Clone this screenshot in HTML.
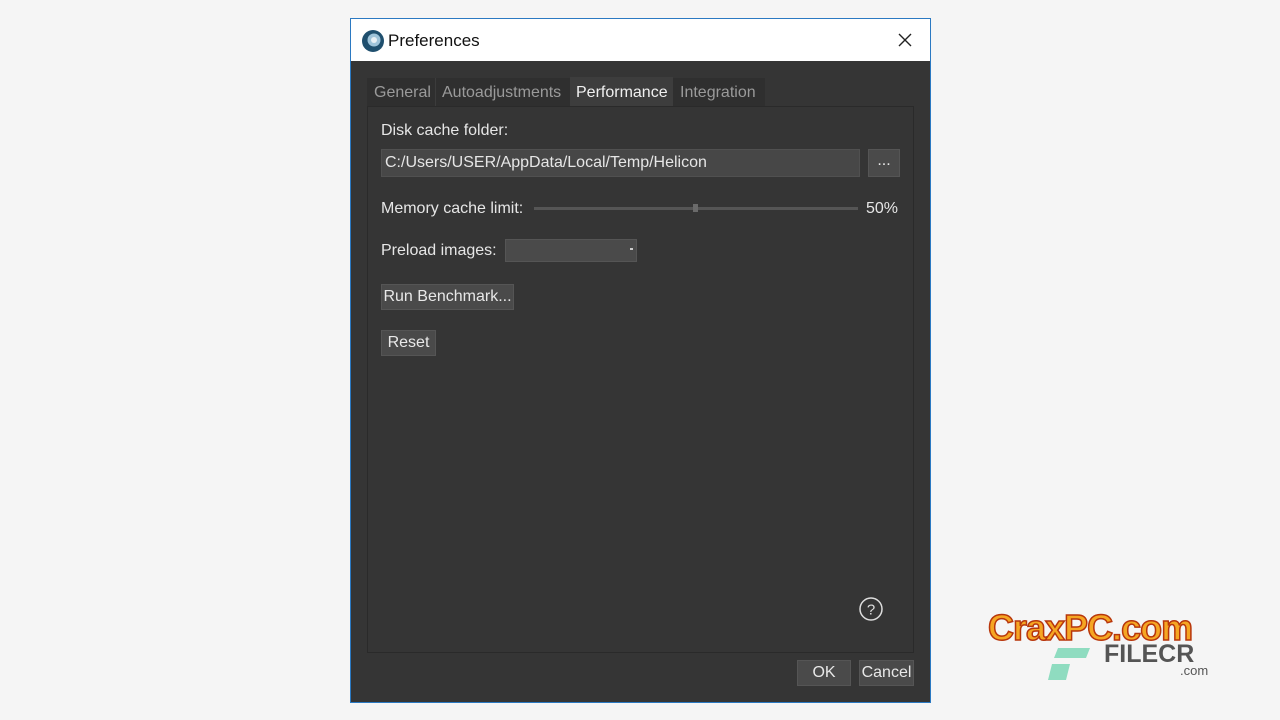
<!DOCTYPE html>
<html><head><meta charset="utf-8"><style>
body{margin:0;width:1280px;height:720px;background:#f5f5f5;position:relative;overflow:hidden;font-family:"Liberation Sans",sans-serif}
.a{position:absolute}
.win{left:350px;top:18px;width:579px;height:683px;border:1px solid #2b79c2;background:#353535}
.t{color:#e6e6e6;font-size:16px;position:absolute;white-space:nowrap}
.btn{position:absolute;background:#4a4a4a;border:1px solid #555;box-sizing:border-box;color:#e8e8e8;font-size:16px;text-align:center}
</style></head><body>
<div class="a win">
 <div class="a" style="left:0;top:0;width:579px;height:42px;background:#fff"></div>
 <svg class="a" style="left:10px;top:10px" width="24" height="24" viewBox="0 0 24 24"><circle cx="12" cy="12" r="11" fill="#1f4f6e"/><circle cx="13" cy="11" r="6.5" fill="#9fc4da"/><circle cx="13" cy="11" r="3" fill="#e8f0f5"/></svg>
 <div class="a" style="left:37px;top:12px;font-size:17px;color:#111">Preferences</div>
 <svg class="a" style="left:547px;top:14px" width="14" height="14"><path d="M1 1L13 13M13 1L1 13" stroke="#222" stroke-width="1.4"/></svg>
 <div class="a" style="left:16px;top:59px;width:398px;height:28px;background:#2f2f2f"></div>
 <div class="t" style="left:23px;top:65px;color:#9a9a9a">General</div>
 <div class="a" style="left:84px;top:59px;width:1px;height:28px;background:#3c3c3c"></div>
 <div class="t" style="left:91px;top:65px;color:#9a9a9a">Autoadjustments</div>
 <div class="a" style="left:219px;top:58px;width:103px;height:30px;background:#3d3d3d"></div>
 <div class="t" style="left:225px;top:65px;color:#f0f0f0">Performance</div>
 <div class="t" style="left:329px;top:65px;color:#9a9a9a">Integration</div>
 <div class="a" style="left:16px;top:87px;width:545px;height:545px;border:1px solid #2a2a2a;background:#353535"></div>
 <div class="t" style="left:30px;top:103px">Disk cache folder:</div>
 <div class="a" style="left:30px;top:130px;width:477px;height:26px;background:#474747;border:1px solid #505050"></div>
 <div class="t" style="left:34px;top:135px">C:/Users/USER/AppData/Local/Temp/Helicon</div>
 <div class="btn" style="left:517px;top:130px;width:32px;height:28px;line-height:22px">...</div>
 <div class="t" style="left:30px;top:181px">Memory cache limit:</div>
 <div class="a" style="left:183px;top:188px;width:324px;height:3px;background:#555"></div>
 <div class="a" style="left:342px;top:185px;width:5px;height:8px;background:#6a6a6a"></div>
 <div class="t" style="left:515px;top:181px">50%</div>
 <div class="t" style="left:30px;top:223px">Preload images:</div>
 <div class="a" style="left:154px;top:220px;width:132px;height:23px;background:#4a4a4a;border:1px solid #555;box-sizing:border-box"></div>
 <div class="a" style="left:279px;top:229px;width:3px;height:2px;background:#ccc"></div>
 <div class="btn" style="left:30px;top:265px;width:133px;height:26px;line-height:24px">Run Benchmark...</div>
 <div class="btn" style="left:30px;top:311px;width:55px;height:26px;line-height:24px">Reset</div>
 <svg class="a" style="left:507px;top:577px" width="26" height="26"><circle cx="13" cy="13" r="11" fill="none" stroke="#ddd" stroke-width="1.5"/><text x="13" y="18.5" text-anchor="middle" font-family="Liberation Sans" font-size="15" fill="#ddd">?</text></svg>
 <div class="btn" style="left:446px;top:641px;width:54px;height:26px;line-height:24px">OK</div>
 <div class="btn" style="left:508px;top:641px;width:55px;height:26px;line-height:24px">Cancel</div>
</div>
<div class="a" style="left:988px;top:607px;font-size:36px;font-weight:bold;color:#f5a623;-webkit-text-stroke:1.5px #b8360c;font-family:'Liberation Sans',sans-serif;letter-spacing:-1px">CraxPC.com</div>
<svg class="a" style="left:1048px;top:648px" width="45" height="34"><polygon points="10,0 42,0 38,10 6,10" fill="#8fdcc0"/><polygon points="4,16 22,16 18,32 0,32" fill="#8fdcc0"/></svg>
<div class="a" style="left:1104px;top:640px;font-size:25px;font-weight:bold;color:#555">FILECR</div>
<div class="a" style="left:1180px;top:663px;font-size:13px;color:#555">.com</div>
</body></html>
